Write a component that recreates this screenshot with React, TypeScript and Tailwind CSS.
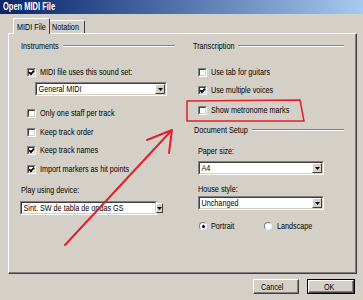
import React from 'react'
import clsx from 'clsx'

const T = ({ children, className }: { children: React.ReactNode; className?: string }) => (
  <span className={clsx('inline-block whitespace-nowrap origin-left scale-x-[0.76]', className)}>{children}</span>
)

const CheckBox = ({ checked }: { checked?: boolean }) => (
  <span className="relative block w-[9px] h-[9px] shrink-0 border border-t-[#808080] border-l-[#808080] border-b-white border-r-white">
    <span className="block w-full h-full bg-white border border-t-[#404040] border-l-[#404040] border-b-[#d4d0c8] border-r-[#d4d0c8]" />
    {checked && (
      <svg className="absolute left-[0px] top-[0px]" width="7" height="7" viewBox="0 0 7 7">
        <path d="M1.2 3.2 L3 5.2 L6 1.6" stroke="#000" strokeWidth="1.8" fill="none" />
      </svg>
    )}
  </span>
)

const Radio = ({ checked }: { checked?: boolean }) => (
  <span className="relative flex items-center justify-center w-[8px] h-[8px] shrink-0 rounded-full bg-white border border-t-[#808080] border-l-[#808080] border-b-[#eeeeee] border-r-[#eeeeee]">
    {checked && <span className="block w-[3px] h-[3px] rounded-full bg-black" />}
  </span>
)

const Check = ({ label, checked, className }: { label: string; checked?: boolean; className?: string }) => (
  <div className={clsx('flex items-center h-[10px]', className)}>
    <CheckBox checked={checked} />
    <T className="ml-[4px]">{label}</T>
  </div>
)

const Header = ({ label, w, className }: { label: string; w: string; className?: string }) => (
  <div className={clsx('flex items-center h-[10px]', className)}>
    <div className={clsx('shrink-0', w)}>
      <T>{label}</T>
    </div>
    <div className="flex-1 h-[2px] border-t border-t-[#808080] border-b border-b-white" />
  </div>
)

const Select = ({ value, className }: { value: string; className?: string }) => (
  <div className={clsx('h-[14px] border border-t-[#808080] border-l-[#808080] border-b-white border-r-white', className)}>
    <div className="flex items-center h-full bg-white border border-t-[#404040] border-l-[#404040] border-b-[#d4d0c8] border-r-[#d4d0c8]">
      <T className="flex-1 pl-[2px] leading-[10px]">{value}</T>
      <div className="flex items-center justify-center w-[10px] h-full bg-[#d4d0c8] border border-t-[#ffffff] border-l-[#ffffff] border-b-[#404040] border-r-[#404040]">
        <svg width="5" height="3" viewBox="0 0 5 3">
          <path d="M0 0 H5 L2.5 3 Z" fill="#000" />
        </svg>
      </div>
    </div>
  </div>
)

const Button = ({ label, primary }: { label: string; primary?: boolean }) => (
  <div className={clsx('h-[15px]', primary ? 'w-[48px] border border-black' : 'w-[46px]')}>
    <div className="flex items-center justify-center h-full border border-t-white border-l-white border-b-[#404040] border-r-[#404040] shadow-[inset_-1px_-1px_0_#808080]">
      <T className="origin-center">{label}</T>
    </div>
  </div>
)

export default function App() {
  return (
    <div className="relative w-[363px] h-[300px] overflow-hidden bg-[#d4d0c8] text-black text-[9.5px] leading-[10px] font-['Liberation_Sans',Arial,sans-serif]">
      <div className="flex items-center h-[14px] pl-[3px] bg-gradient-to-r from-[#0a246a] to-[#a6caf0]">
        <span className="inline-block whitespace-nowrap origin-left scale-x-[0.75] text-white font-bold text-[10px]">Open MIDI File</span>
      </div>

      <div className="flex items-end h-[19px] pl-[13px]">
        <div className="relative z-10 flex items-center w-[37px] h-[16px] mb-[-1px] pl-[3px] bg-[#d4d0c8] border-t border-l border-t-white border-l-white border-r border-r-[#404040] rounded-t-[2px]">
          <T>MIDI File</T>
        </div>
        <div className="flex items-center w-[35px] h-[13px] pl-[2px] border-t border-t-white border-r border-r-[#404040] rounded-t-[2px]">
          <T>Notation</T>
        </div>
      </div>

      <div className="flex ml-[8px] w-[349px] h-[241px] border border-t-white border-l-white border-r-[#404040] border-b-[#404040] shadow-[inset_-1px_-1px_0_#808080]">
        <div className="flex flex-col w-[172px]">
          <Header label="Instruments" w="w-[42px]" className="mt-[7px] ml-[12px] mr-[6px]" />
          <Check label="MIDI file uses this sound set:" checked className="mt-[16px] ml-[18px]" />
          <Select value="General MIDI" className="mt-[5px] ml-[26px] w-[132px]" />
          <Check label="Only one staff per track" className="mt-[12px] ml-[18px]" />
          <Check label="Keep track order" className="mt-[9px] ml-[18px]" />
          <Check label="Keep track names" checked className="mt-[8px] ml-[18px]" />
          <Check label="Import markers as hit points" checked className="mt-[9px] ml-[18px]" />
          <div className="flex items-center h-[10px] mt-[11px] ml-[12px]">
            <T>Play using device:</T>
          </div>
          <Select value="Sint. SW de tabla de ondas GS" className="mt-[6px] ml-[11px] w-[137px]" />
        </div>

        <div className="flex flex-col flex-1">
          <Header label="Transcription" w="w-[45px]" className="mt-[7px] ml-[12px] mr-[12px]" />
          <Check label="Use tab for guitars" className="mt-[16px] ml-[17px]" />
          <Check label="Use multiple voices" checked className="mt-[8px] ml-[17px]" />
          <Check label="Show metronome marks" className="mt-[10px] ml-[17px]" />
          <Header label="Document Setup" w="w-[58px]" className="mt-[10px] ml-[13px] mr-[12px]" />
          <div className="flex items-center h-[10px] mt-[11px] ml-[17px]">
            <T>Paper size:</T>
          </div>
          <Select value="A4" className="mt-[5px] ml-[17px] w-[126px]" />
          <div className="flex items-center h-[10px] mt-[9px] ml-[17px]">
            <T>House style:</T>
          </div>
          <Select value="Unchanged" className="mt-[2px] ml-[17px] w-[126px]" />
          <div className="flex items-center h-[10px] mt-[11px] ml-[18px]">
            <Radio checked />
            <T className="ml-[4px] w-[53px]">Portrait</T>
            <Radio />
            <T className="ml-[5px]">Landscape</T>
          </div>
        </div>
      </div>

      <div className="flex justify-end gap-[8px] mt-[5px] pr-[8px]">
        <Button label="Cancel" />
        <Button label="OK" primary />
      </div>

      <svg className="absolute inset-0 pointer-events-none" width="363" height="300" viewBox="0 0 363 300">
        <path d="M187 101 L300 100 L304 121 L187 121 Z" stroke="#e0202a" strokeWidth="1.5" fill="none" />
        <path d="M65 245 L172 130 M147 140 L172 130 L169 153" stroke="#e0202a" strokeWidth="2" fill="none" strokeLinecap="round" strokeLinejoin="round" />
      </svg>
    </div>
  )
}
